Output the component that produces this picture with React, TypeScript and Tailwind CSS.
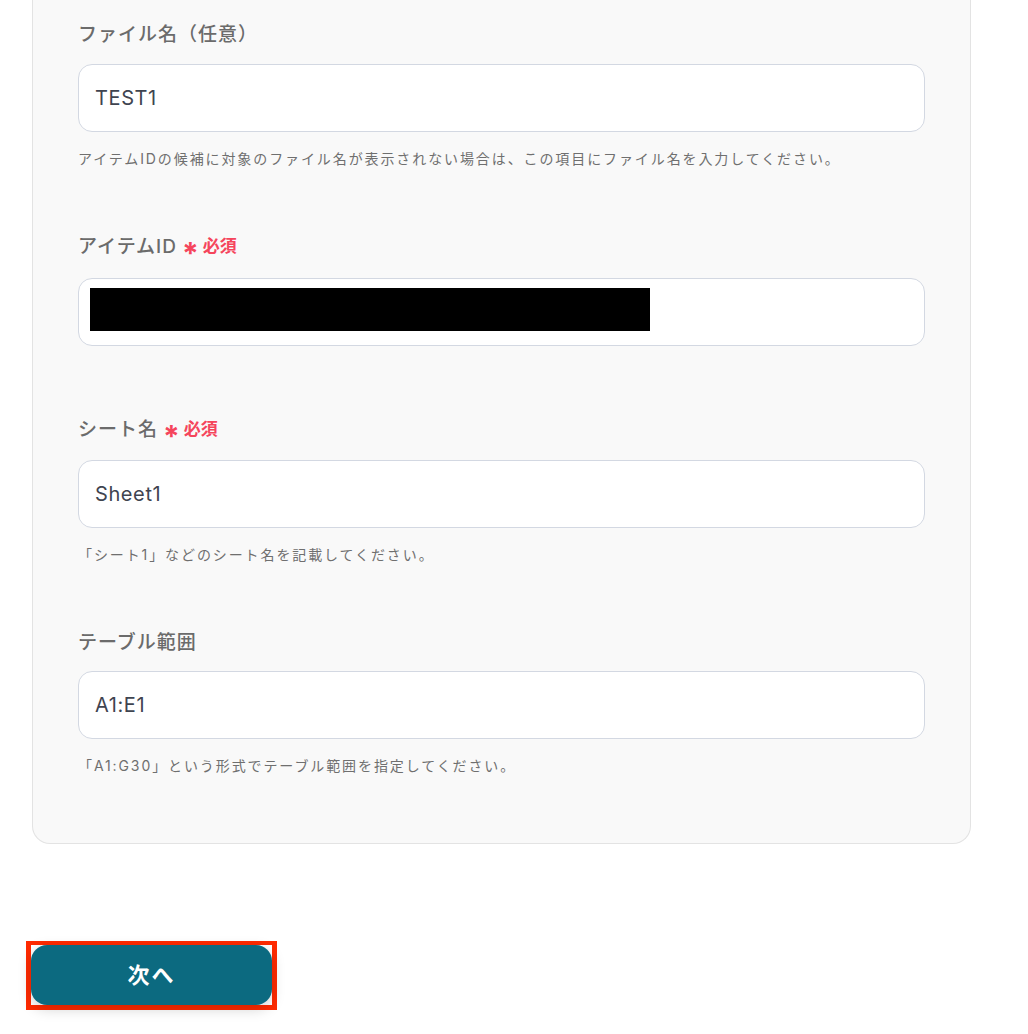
/**
 * App — Excel-style action settings form (lower half) with the "next" button.
 */

const FONT = {
  fontFamily: '"Inter", "Noto Sans CJK JP", "Noto Sans", sans-serif',
}

export default function App() {
  return (
    <div className="min-h-[1034px] bg-white" style={FONT}>
      {/* Settings card, scrolled so that its top is above the viewport */}
      <div className="ml-[32px] w-[939px] rounded-b-[18px] border border-t-0 border-[#e3e3e3] bg-[#f9f9f9] px-[45px] pt-[21px] pb-[67px]">
        <Label text="ファイル名（任意）" />
        <div className="mt-[15px]">
          <TextBox value="TEST1" />
        </div>
        <Help text="アイテムIDの候補に対象のファイル名が表示されない場合は、この項目にファイル名を入力してください。" />

        <div className="mt-[64px]">
          <Label text="アイテムID" required />
        </div>
        <div className="mt-[17px] flex h-[68px] items-start rounded-[14px] border border-[#d3d8e2] bg-white pl-[11px] pt-[9px]">
          <div className="h-[43px] w-[560px] bg-black" />
        </div>

        <div className="mt-[70px]">
          <Label text="シート名" required />
        </div>
        <div className="mt-[16px]">
          <TextBox value="Sheet1" />
        </div>
        <Help text="「シート1」などのシート名を記載してください。" />

        <div className="mt-[64px]">
          <Label text="テーブル範囲" />
        </div>
        <div className="mt-[14px]">
          <TextBox value="A1:E1" />
        </div>
        <Help text="「A1:G30」という形式でテーブル範囲を指定してください。" />
      </div>

      {/* Next button, highlighted with a red frame */}
      <div className="ml-[26px] mt-[97px] inline-block border-[5px] border-t-4 border-[#ff2a00]">
        <button className="flex h-[60px] w-[241px] items-center justify-center rounded-[16px] bg-[#0c6a80] text-[22px] font-bold tracking-[2px] text-white shadow-[0_4px_14px_rgba(0,0,0,0.18)]">
          次へ
        </button>
      </div>
    </div>
  )
}

function Label({ text, required }: { text: string; required?: boolean }) {
  return (
    <div className="flex h-[28px] items-center">
      <span className="text-[19px] font-medium leading-[28px] tracking-[1px] text-[#6b6b6b]">{text}</span>
      {required && (
        <span className="ml-[5px] flex items-center text-[#f5455c]">
          <span className="translate-y-[6px] text-[30px] font-bold leading-none">*</span>
          <span className="ml-[4px] text-[17px] font-bold">必須</span>
        </span>
      )}
    </div>
  )
}

function TextBox({ value }: { value: string }) {
  return (
    <div className="flex h-[68px] items-center rounded-[14px] border border-[#d3d8e2] bg-white px-[16px] text-[20px] tracking-[0.6px] text-[#3f4450]">
      {value}
    </div>
  )
}

function Help({ text }: { text: string }) {
  return <p className="mt-[17px] text-[14px] leading-[20px] tracking-[1.9px] text-[#6f6f6f]">{text}</p>
}
